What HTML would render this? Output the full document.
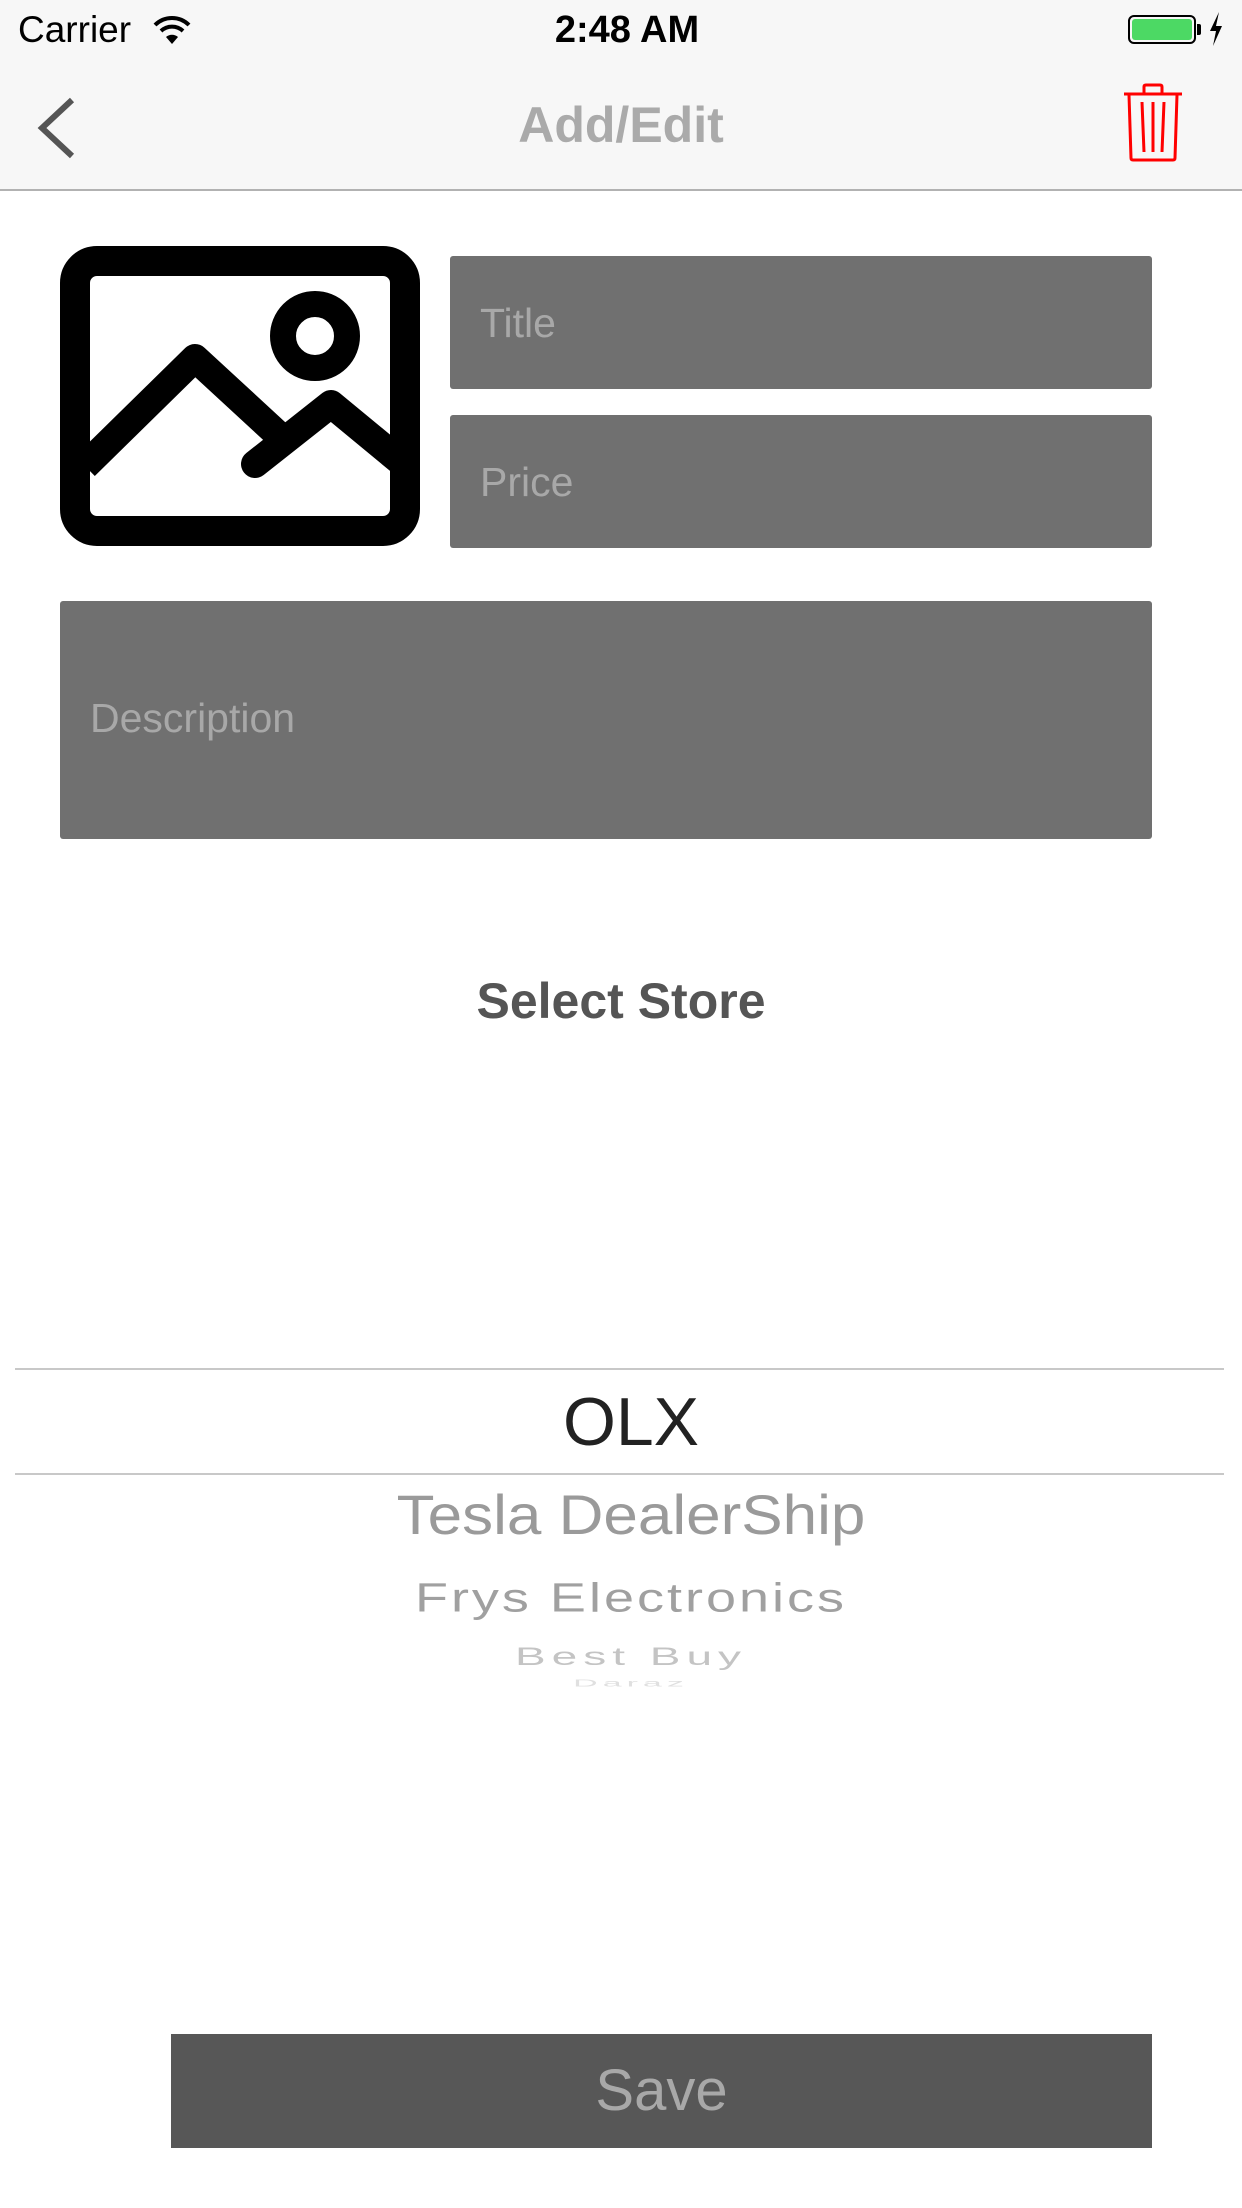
<!DOCTYPE html>
<html><head><meta charset="utf-8"><style>
*{margin:0;padding:0;box-sizing:border-box}
html,body{width:1242px;height:2208px;background:#fff;overflow:hidden;font-family:"Liberation Sans",sans-serif;position:relative}
.abs{position:absolute}
.field{position:absolute;background:#707070;border-radius:3px;color:#a8a8a8;font-size:41px}
.pk{position:absolute;left:10px;width:1242px;text-align:center;white-space:nowrap}
</style></head><body>
<div class="abs" style="left:0;top:0;width:1242px;height:191px;background:#f7f7f7;border-bottom:2px solid #b2b2b2"></div>
<div class="abs" style="left:18px;top:9px;font-size:37px;color:#000">Carrier</div>
<svg class="abs" style="left:152px;top:14px" width="40" height="32" viewBox="0 0 40 32"><path d="M3 11 A24 24 0 0 1 37 11" stroke="#000" stroke-width="4" fill="none"/><path d="M9 17 A16 16 0 0 1 31 17" stroke="#000" stroke-width="4" fill="none"/><path d="M14 23 L20 30 L26 23 A9 9 0 0 0 14 23Z" fill="#000"/></svg>
<div class="abs" style="left:6px;width:1242px;top:9px;text-align:center;font-size:38px;font-weight:bold;color:#000">2:48 AM</div>
<div class="abs" style="left:1128px;top:15px;width:68px;height:29px;border:2px solid #000;border-radius:6px;padding:2px"><div style="width:100%;height:100%;background:#4cd964;border-radius:3px"></div></div>
<div class="abs" style="left:1197px;top:24px;width:4px;height:11px;background:#000;border-radius:0 2px 2px 0"></div>
<svg class="abs" style="left:1208px;top:12px" width="16" height="34" viewBox="0 0 16 34"><path d="M11 0 L2 19 L8 19 L5 34 L14 14 L8 14 Z" fill="#000"/></svg>
<svg class="abs" style="left:34px;top:96px" width="44" height="64" viewBox="0 0 44 64"><path d="M38 4 L8 32 L38 60" stroke="#555" stroke-width="6" fill="none"/></svg>
<div class="abs" style="left:0;width:1242px;top:96px;text-align:center;font-size:50px;font-weight:bold;color:#aaa">Add/Edit</div>
<svg class="abs" style="left:1122px;top:82px" width="62" height="80" viewBox="0 0 62 80"><g stroke="#f00" stroke-width="3" fill="none"><path d="M2 12 H60"/><path d="M22 12 V5 Q22 3 24 3 H38 Q40 3 40 5 V12"/><path d="M7 13 L9 76 Q9 78 11 78 H51 Q53 78 53 76 L55 13"/><path d="M20 20 L22 70 M31 20 V70 M42 20 L40 70"/></g></svg>
<svg class="abs" style="left:60px;top:246px" width="360" height="300" viewBox="0 0 360 300"><rect x="15" y="15" width="330" height="270" rx="22" stroke="#000" stroke-width="30" fill="none"/><circle cx="255" cy="90" r="32" stroke="#000" stroke-width="26" fill="none"/><path d="M25 220 L135 112 L225 195" stroke="#000" stroke-width="28" fill="none" stroke-linejoin="round"/><path d="M195 218 L271 158 L340 215" stroke="#000" stroke-width="28" fill="none" stroke-linecap="round" stroke-linejoin="round"/></svg>
<div class="field" style="left:450px;top:256px;width:702px;height:133px;padding:44px 0 0 30px">Title</div>
<div class="field" style="left:450px;top:415px;width:702px;height:133px;padding:44px 0 0 30px">Price</div>
<div class="field" style="left:60px;top:601px;width:1092px;height:238px;padding:94px 0 0 30px">Description</div>
<div class="abs" style="left:0;width:1242px;top:972px;text-align:center;font-size:50px;font-weight:bold;color:#555">Select Store</div>
<div class="abs" style="left:15px;top:1368px;width:1209px;height:2px;background:#c8c8c8"></div>
<div class="abs" style="left:15px;top:1473px;width:1209px;height:2px;background:#c8c8c8"></div>
<div class="pk" style="top:1384px;font-size:68px;color:#222;line-height:76px">OLX</div>
<div class="pk" style="top:1484px;font-size:62px;color:#9a9a9a;line-height:64px;transform:scaleY(0.9)">Tesla DealerShip</div>
<div class="pk" style="top:1570px;font-size:54px;color:#a0a0a0;line-height:56px;letter-spacing:3px;transform:scaleY(0.76)">Frys Electronics</div>
<div class="pk" style="top:1632px;font-size:46px;color:#c4c4c4;line-height:48px;letter-spacing:6px;transform:scaleY(0.55)">Best Buy</div>
<div class="pk" style="top:1668px;font-size:34px;color:#e0e0e0;line-height:30px;letter-spacing:5px;transform:scaleY(0.3)">Daraz</div>
<div class="abs" style="left:171px;top:2034px;width:981px;height:114px;background:#575757;color:#a8a8a8;font-size:58px;text-align:center;line-height:114px">Save</div>
</body></html>
